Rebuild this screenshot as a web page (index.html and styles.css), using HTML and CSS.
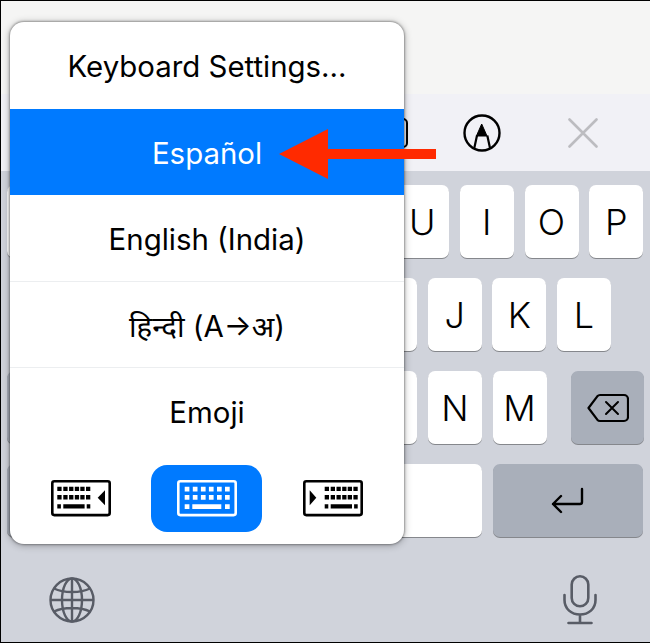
FILE: index.html
```html
<!DOCTYPE html>
<html lang="en">
<head>
    <meta charset="UTF-8">
    <title>Keyboard menu</title>
    <link rel="stylesheet" href="styles.css">
</head>
<body>
<svg class="defs" width="0" height="0">
    <symbol id="dots" viewBox="0 0 33 23" overflow="visible">
        <path d="M0 0h4.3v4.3H0zM6 0h4.3v4.3H6zM11.8 0h4.3v4.3h-4.3zM17.5 0h4.3v4.3h-4.3zM23 0h4.3v4.3H23zM28.7 0H33v4.3h-4.3zM0 8.4h4.3v4.3H0zM6 8.4h4.3v4.3H6zM11.8 8.4h4.3v4.3h-4.3zM17.5 8.4h4.3v4.3h-4.3zM23 8.4h4.3v4.3H23zM28.7 8.4H33v4.3h-4.3zM0 17.6h3.6v4.3H0zM6 17.6h21.3v4.3H6zM29.4 17.6H33v4.3h-3.6z"/>
    </symbol>
</svg>
<main class="screen">
    <div class="paper"></div>
    <div class="toolbar">
        <span class="tool-box"></span>
        <svg class="ico-pen" width="38" height="38" viewBox="0 0 38 38" fill="none" stroke="#000" stroke-width="2.4">
            <circle cx="19" cy="19" r="17.500"/>
            <path d="M11.300 34l2.700-12.500M27 34l-2.700-12.500" stroke-width="2.200"/>
            <path d="M18.700 10l5.300 12h-10.600z" fill="#000" stroke-width="1"/>
        </svg>
        <svg class="ico-close" width="30" height="30" viewBox="0 0 30 30" fill="none" stroke="#bcbcc0" stroke-width="2.600" stroke-linecap="round">
            <path d="M1.500 1.500l27 27M28.500 1.500l-27 27"/>
        </svg>
    </div>
    <section class="keyboard">
        <!-- keys under the menu stay blank, only their edges show -->
        <div class="row row-top">
            <span class="key"></span><span class="key"></span><span class="key"></span><span class="key"></span><span class="key"></span>
            <span class="key"></span><span class="key">U</span><span class="key">I</span><span class="key">O</span><span class="key">P</span>
        </div>
        <div class="row row-mid">
            <span class="key"></span><span class="key"></span><span class="key"></span><span class="key"></span><span class="key"></span>
            <span class="key"></span><span class="key">J</span><span class="key">K</span><span class="key">L</span>
        </div>
        <div class="row row-low">
            <span class="key key-dark key-side"></span>
            <span class="key-group">
                <span class="key"></span><span class="key"></span><span class="key"></span><span class="key"></span>
                <span class="key"></span><span class="key">N</span><span class="key">M</span>
            </span>
            <span class="key key-dark key-side">
                <svg width="42" height="30" viewBox="0 0 42 30" fill="none" stroke="#000" stroke-width="2.200" stroke-linejoin="round">
                    <path d="M13 2h24a4 4 0 0 1 4 4v18a4 4 0 0 1-4 4H13c-1 0-2-.5-2.700-1.300L1.500 15l8.800-11.700C11 2.500 12 2 13 2z"/>
                    <path d="M19 9l12 12M31 9L19 21" stroke-linecap="round" stroke-width="2"/>
                </svg>
            </span>
        </div>
        <div class="row row-bottom">
            <span class="key key-dark key-num"></span>
            <span class="key key-space"></span>
            <span class="key key-dark key-return">
                <svg width="34" height="28" viewBox="0 0 34 28" fill="none" stroke="#000" stroke-width="2.400" stroke-linecap="round" stroke-linejoin="round">
                    <path d="M31 2v13a2 2 0 0 1-2 2H2M10 9l-8 8 8 8"/>
                </svg>
            </span>
        </div>
        <div class="dock">
            <svg width="46" height="46" viewBox="0 0 46 46" fill="none" stroke="#585c66" stroke-width="2.400">
                <circle cx="23" cy="23" r="21.500"/>
                <ellipse cx="23" cy="23" rx="10" ry="21.500"/>
                <path d="M23 1.500v43M1.500 23h43M5 11.500c5 2.500 11 3.500 18 3.500s13-1 18-3.500M5 34.500c5-2.500 11-3.500 18-3.500s13 1 18 3.500"/>
            </svg>
            <svg width="34" height="50" viewBox="0 0 34 50" fill="none" stroke="#585c66" stroke-width="2.600" stroke-linecap="round">
                <rect x="8.700" y="1.300" width="16.600" height="30" rx="8.300"/>
                <path d="M1.500 20v5c0 9 7 14.500 15.500 14.500S32.500 34 32.500 25v-5M17 39.500V48M5.500 48h23"/>
            </svg>
        </div>
    </section>

    <nav class="menu">
        <a class="menu-item">Keyboard Settings...</a>
        <a class="menu-item active">Español</a>
        <a class="menu-item">English (India)</a>
        <a class="menu-item">हिन्दी (A→अ)</a>
        <a class="menu-item last">Emoji</a>
        <div class="menu-modes">
            <span class="mode">
                <svg class="kb" width="60" height="37" viewBox="0 0 60 37">
                    <rect x="1.300" y="1.300" width="57.400" height="33.800" rx="2" fill="#fff" stroke="#000" stroke-width="2.600"/>
                    <use href="#dots" x="6.300" y="6.700" width="33" height="23"/>
                    <path d="M46.700 17.700l7.300-7.500v15z"/>
                </svg>
            </span>
            <span class="mode active">
                <svg class="kb" width="60" height="37" viewBox="0 0 60 37" fill="#fff">
                    <rect x="1.300" y="1.300" width="57.400" height="33.800" rx="2" fill="none" stroke="#fff" stroke-width="2.600"/>
                    <path d="M7.700 6.700h4.700v4.700H7.700zM15.800 6.700h4.700v4.700h-4.700zM23.900 6.700h4.700v4.700h-4.700zM31.900 6.700h4.700v4.700h-4.700zM40 6.700h4.700v4.700H40zM48 6.700h4.700v4.700H48zM7.700 15h4.700v4.700H7.700zM15.800 15h4.700v4.700h-4.700zM23.900 15h4.700v4.700h-4.700zM31.900 15h4.700v4.700h-4.700zM40 15h4.700v4.700H40zM48 15h4.700v4.700H48zM7.700 24.300h4.700V29H7.700zM15.300 24.300h29V29h-29zM48 24.300h4.700V29H48z"/>
                </svg>
            </span>
            <span class="mode">
                <svg class="kb" width="60" height="37" viewBox="0 0 60 37">
                    <rect x="1.300" y="1.300" width="57.400" height="33.800" rx="2" fill="#fff" stroke="#000" stroke-width="2.600"/>
                    <use href="#dots" x="21.700" y="6.700" width="33" height="23"/>
                    <path d="M13.300 17.700L6.700 10.200v15z"/>
                </svg>
            </span>
        </div>
    </nav>

    <svg class="arrow" width="158" height="50" viewBox="0 0 158 50">
        <path d="M0 25L49 0v20h108v10H49v20z" fill="#ff2a00"/>
    </svg>
</main>
</body>
</html>
```

FILE: styles.css
```css
*{box-sizing: border-box;}
body{margin: 0;padding: 0;font-family: "Inter","Noto Sans",sans-serif;background: #000;}
.defs{position: absolute;}
.screen{position: relative;width: 650px;height: 643px;overflow: hidden;display: flex;flex-direction: column;
    border: solid #000;border-width: 1px 0 1px 1px;background: #d0d3db;}

.paper{height: 93px;background: #f5f5f4;}
.toolbar{height: 77px;background: #f1f1f6;display: flex;align-items: center;padding-left: 377px;}
.tool-box{width: 30px;height: 30px;border: 2.400px solid #000;border-radius: 5px;}
.ico-pen{margin-left: 55px;}
.ico-close{margin-left: 67px;}

.keyboard{flex: 1;padding: 14px 6px 0;display: flex;flex-direction: column;gap: 20px;}
.row{display: flex;height: 73px;}
.row-top{gap: 10.700px;}
.row-mid{gap: 10.700px;padding-left: 32.500px;}
.row-low{justify-content: space-between;}
.row-bottom{gap: 11px;}
.key-group{display: flex;gap: 10.700px;}

.key{width: 54px;height: 73px;flex: none;display: flex;align-items: center;justify-content: center;background: #fff;
    border-radius: 7px;box-shadow: 0 1px 0 #85878c;font-size: 36px;font-weight: 300;color: #000;}
.key-dark{background: #a9afba;}
.key-side{width: 73px;}
.key-num{width: 150px;}
.key-space{width: 314px;}
.key-return{width: 150px;}

.dock{display: flex;justify-content: space-between;align-items: center;padding: 0 47px 0 42px;margin-top: 18px;}

.menu{position: absolute;left: 9px;top: 21px;width: 394px;height: 522px;background: #fff;border-radius: 14px;overflow: hidden;
    display: flex;flex-direction: column;box-shadow: 0 0 2px 1px rgba(0,0,0,.3),0 1px 7px 1px rgba(0,0,0,.25);}
.menu-item{height: 86.500px;flex: none;display: flex;align-items: center;justify-content: center;padding-top: 3px;font-size: 29.400px;
    font-weight: 400;color: #000;border-bottom: 1px solid #eceef0;}
.menu-item.active{background: #007aff;color: #fff;border-bottom: 0;}
.menu-item:first-child{border-bottom: 0;}
.menu-item.last{border-bottom: 0;}
.menu-modes{flex: 1;display: flex;align-items: flex-start;justify-content: space-between;padding: 10px 10px 0 9px;}
.mode{width: 123px;height: 67px;border-radius: 16px;display: flex;align-items: center;justify-content: center;}
.mode.active{background: #007aff;width: 111px;}
.kb{display: block;}

.arrow{position: absolute;left: 278px;top: 128px;}
```
